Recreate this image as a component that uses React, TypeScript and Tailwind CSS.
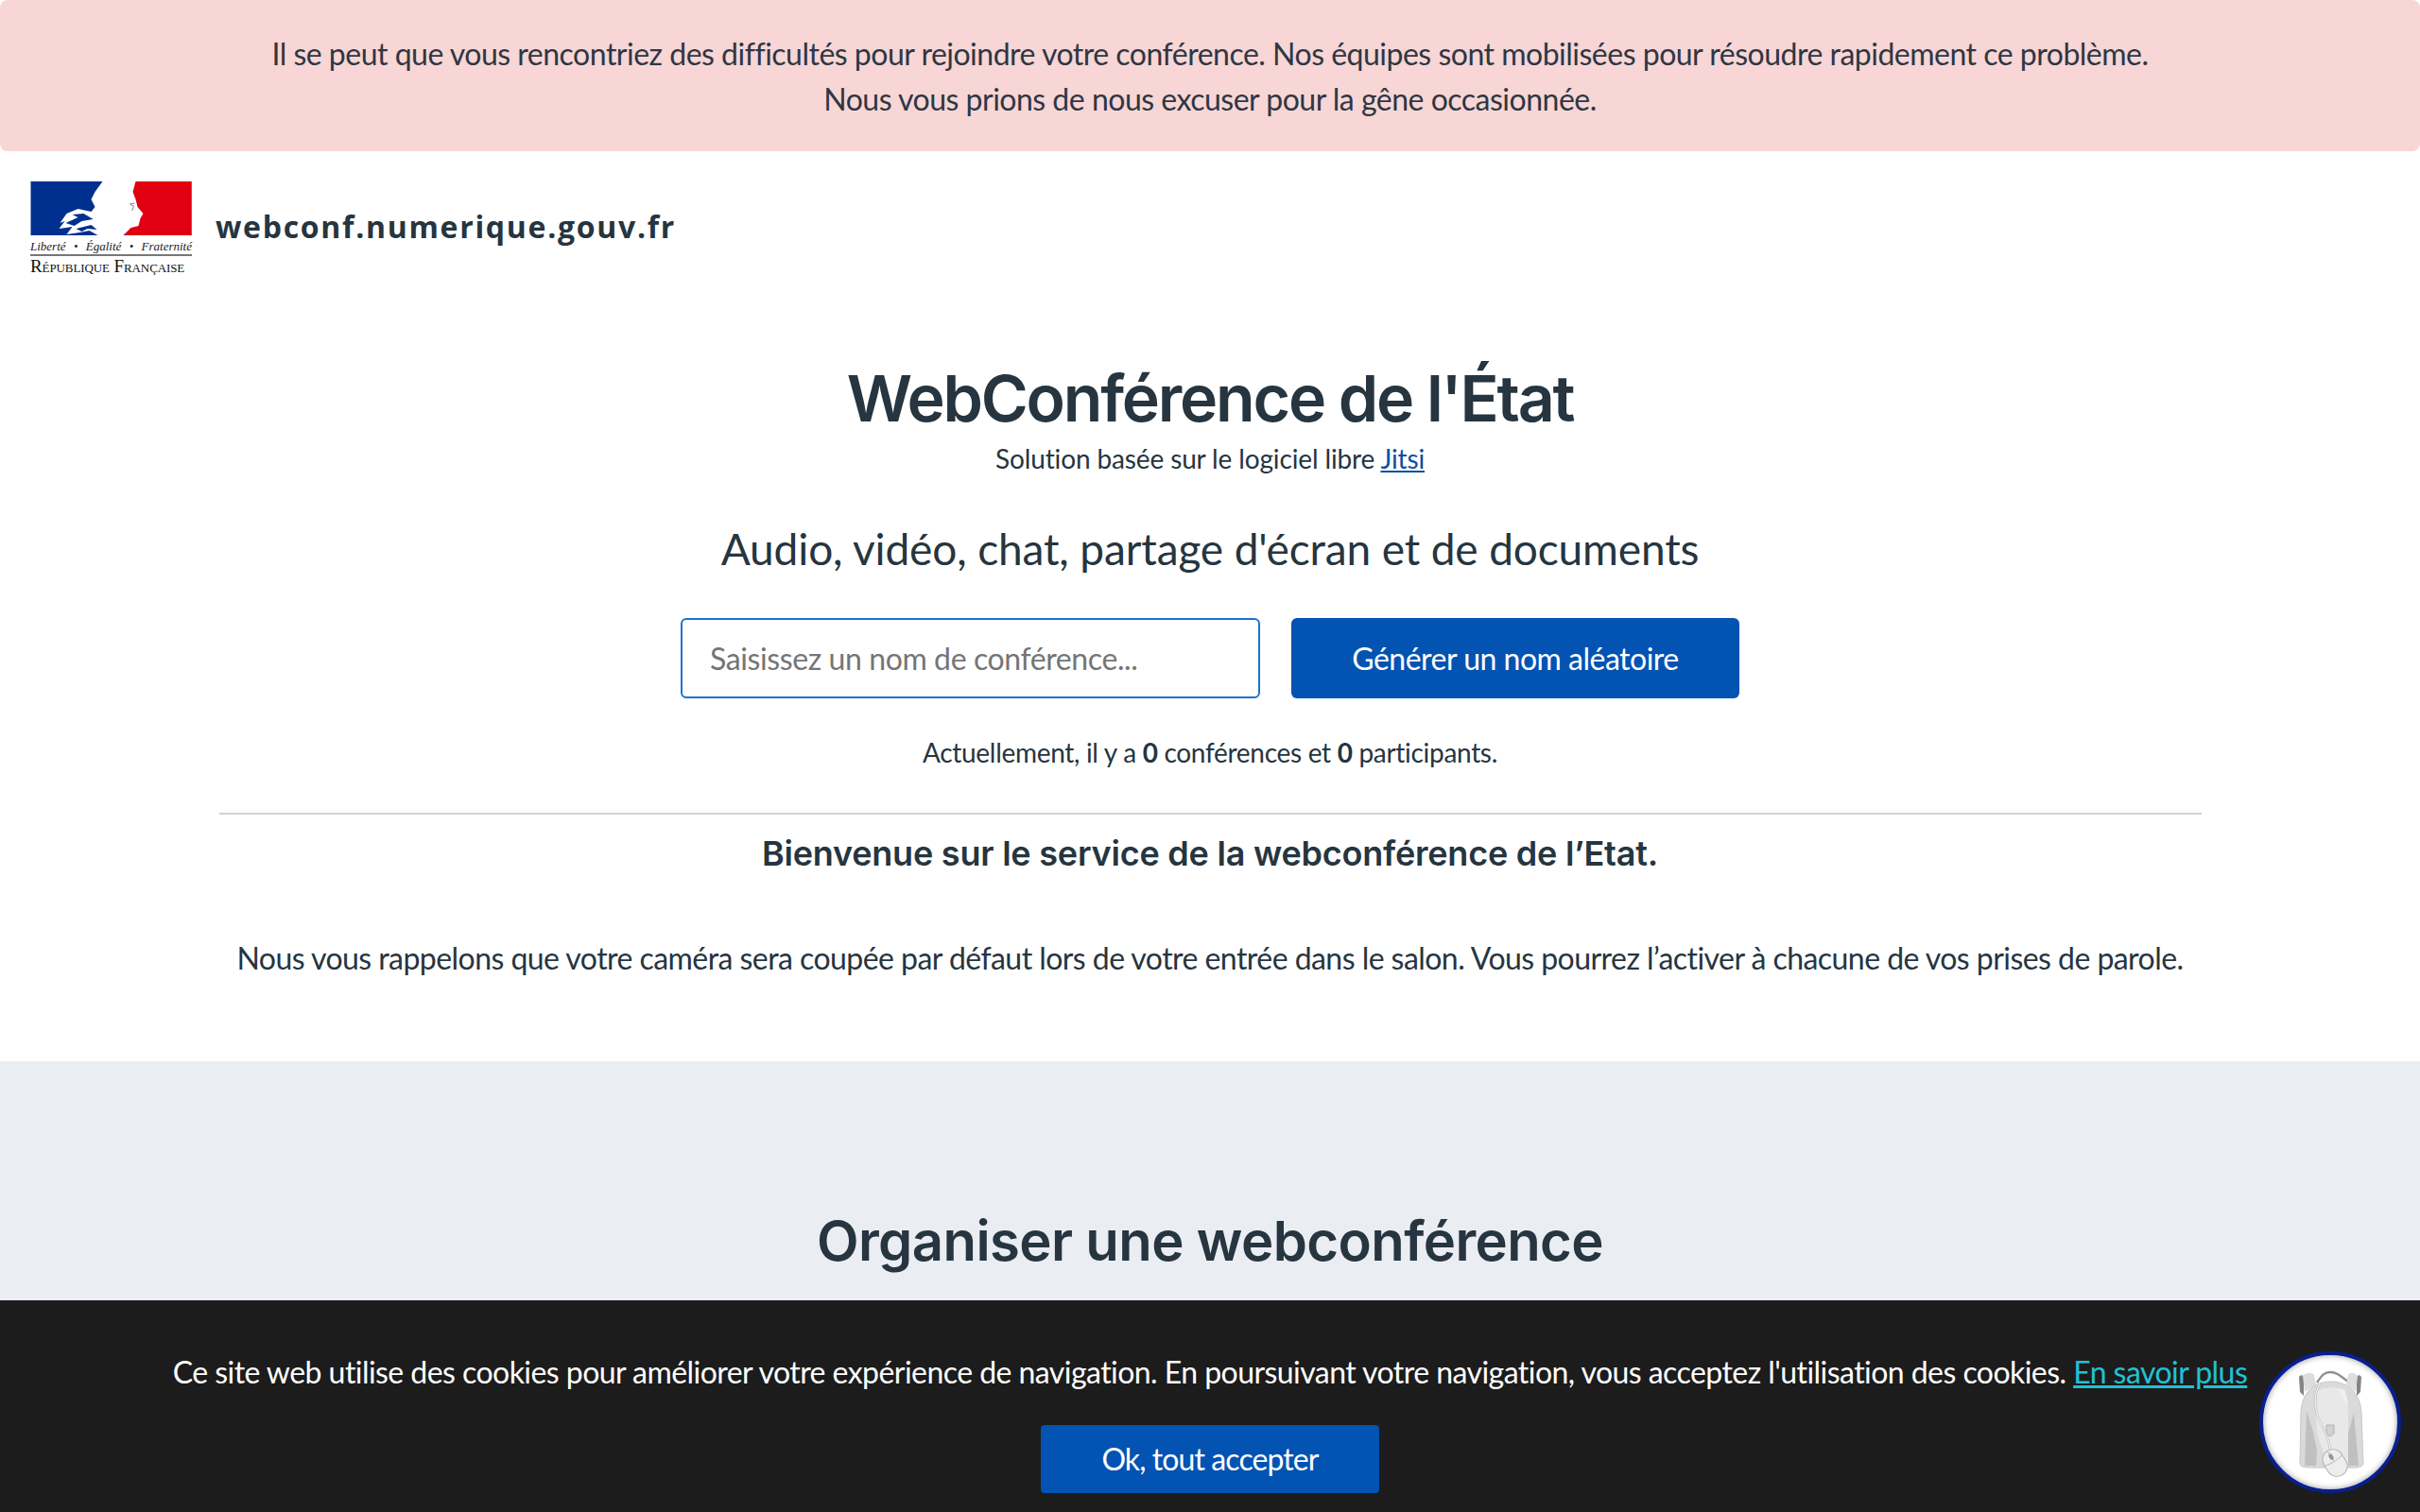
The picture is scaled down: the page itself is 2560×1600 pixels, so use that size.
const body = "font-['Lato','Liberation_Sans',sans-serif]";
const display = "font-['Inter','Liberation_Sans',sans-serif]";

// Logo de la République, le profil est dessiné à la main
const Logo = () => (
  <div className="w-[171px] flex flex-col">
    <svg viewBox="0 0 170 57" className="w-[171px] h-[57px] block">
      <rect x="0" y="0" width="170" height="57" fill="#00308f" />
      <rect x="100" y="0" width="70" height="57" fill="#e1000f" />
      <path d="M76 0 L111 0 L108 11 L111 19 L113 27 L119 34 L116 39 L114 47 L106 49 L98 57 L71 57 L62 52 L52 54 L38 56 L44 48 L30 50 L36 42 L31 44 L38 34 L50 29 L64 32 L68 27 L64 19 L68 11 Z" fill="#fff" />
      <path d="M37 44 L50 38 L44 35 L56 34 L66 40 L54 42 L46 47 Z M48 50 L64 46 L70 51 L60 50 L54 53 Z" fill="#00308f" />
      <path d="M110 23 L105 24 L109 26 L107 31" stroke="#888" strokeWidth="1" fill="none" />
    </svg>
    <div className="mt-[4px] flex justify-between font-['Liberation_Serif',serif] italic text-[13px] leading-[15px] text-[#222] whitespace-nowrap">
      <span>Liberté</span><span>•</span><span>Égalité</span><span>•</span><span>Fraternité</span>
    </div>
    <div className="mt-[1px] border-t-2 border-[#777] pt-[2px] font-['Liberation_Serif',serif] [font-variant:small-caps] text-[19px] leading-[17px] text-[#111] whitespace-nowrap tracking-[-0.1px]">
      République Française
    </div>
  </div>
);

const Backpack = () => (
  <svg viewBox="0 0 90 125" className="w-[90px] h-[125px]">
    <path d="M12 14 C14 11 17 12 17 15 L17 34 L13 30 Z" fill="#858585" />
    <path d="M78 14 C76 11 73 12 73 15 L73 34 L77 30 Z" fill="#858585" />
    <path d="M31 20 C36 13 38 9 45 9 C52 9 56 13 65 20" stroke="#8f8f8f" strokeWidth="2.4" fill="none" />
    <path d="M16 13 C20 9 26 9 28 12 L30 22 L18 30 Z M74 13 C70 9 66 9 64 12 L62 22 L72 30 Z" fill="#dddddd" />
    <path d="M13 106 L14 52 C15 30 28 19 46 19 C64 19 77 32 78 52 L80 106 C78 111 70 110 62 110 L28 110 C20 110 14 110 13 106 Z" fill="#dadada" stroke="#c6c6c6" />
    <path d="M32 28 C42 24 52 25 60 27 C64 36 64 44 64 55 L64 106 L43 106 C36 90 30 75 30 58 C30 44 30 36 32 28 Z" fill="#e8e8e8" />
    <path d="M54 27 C60 27 63 34 63 44 L58 34 Z" fill="#f2f2f2" />
    <path d="M20 50 L27 72 L31 92 L30 108 L18 108 Z" fill="#c0c0c0" />
    <path d="M70 52 L64 74 L64 108 L75 108 Z" fill="#c0c0c0" />
    <path d="M41 65 H49 V74 L45 77 L41 74 Z" fill="#d2d2d2" stroke="#b2b2b2" />
    <path d="M34 21 C29 30 28 42 31 53 C34 66 44 74 45 92" stroke="#b0b0b0" strokeWidth="2.2" fill="none" />
    <path d="M34 21 C29 30 28 42 31 53 C34 66 44 74 45 92" stroke="#f6f6f6" strokeWidth="1.2" fill="none" />
    <g transform="rotate(-32 50 105)">
      <rect x="39" y="90" width="22" height="30" rx="11" fill="#ededed" stroke="#aeaeae" strokeWidth="0.9" />
      <path d="M39 102 Q50 105 61 102 M50 90 V103" stroke="#aeaeae" strokeWidth="0.8" fill="none" />
      <rect x="48" y="94" width="4" height="7" rx="2" fill="#989898" />
    </g>
  </svg>
);

export default function App() {
  return (
    <div className={`relative w-full h-[1600px] overflow-hidden bg-white text-[#26353f] ${body}`}>
      <div className="h-[160px] bg-[#f7d6d5] rounded-[8px] pt-[33px] text-center text-[32px] leading-[48px] text-[#2f3644] tracking-[-0.5px]">
        <p>Il se peut que vous rencontriez des difficultés pour rejoindre votre conférence. Nos équipes sont mobilisées pour résoudre rapidement ce problème.</p>
        <p>Nous vous prions de nous excuser pour la gêne occasionnée.</p>
      </div>

      <header className="h-[222px] pl-[32px] pt-[32px] flex items-start gap-[25px]">
        <Logo />
        <span className="mt-[23px] font-['Open_Sans',sans-serif] font-bold text-[32px] leading-[50px] tracking-[1.7px] text-[#26353f]">webconf.numerique.gouv.fr</span>
      </header>

      <main className="flex flex-col items-center">
        <h1 className={`${display} font-semibold text-[68px] leading-[80px] -mt-[1px] tracking-[-2.2px]`}>WebConférence de l'État</h1>
        <p className="mt-[4px] text-[28px] leading-[40px] tracking-[-0.13px]">
          Solution basée sur le logiciel libre <a href="#" className="text-[#0b4ea2] underline">Jitsi</a>
        </p>
        <h2 className="mt-[46px] text-[46px] leading-[60px] tracking-[-0.13px]">Audio, vidéo, chat, partage d'écran et de documents</h2>
        <div className="mt-[43px] flex gap-[33px]">
          <input
            placeholder="Saisissez un nom de conférence..."
            className="w-[613px] h-[85px] px-[29px] rounded-[6px] border-2 border-[#1a73d0] bg-white text-[32px] tracking-[-0.4px] placeholder:text-[#757575] outline-none"
          />
          <button className="w-[474px] h-[85px] rounded-[6px] bg-[#0353b2] text-white text-[32px] tracking-[-0.5px]">Générer un nom aléatoire</button>
        </div>
        <p className="mt-[37px] text-[28px] leading-[40px] tracking-[-0.3px]">
          Actuellement, il y a <b>0</b> conférences et <b>0</b> participants.
        </p>
        <hr className="mt-[44px] w-[2097px] border-t-2 border-[#d3d3d3]" />
        <h3 className={`${display} mt-[19px] font-semibold text-[36px] leading-[44px] tracking-[-0.22px]`}>Bienvenue sur le service de la webconférence de l’Etat.</h3>
        <p className="mt-[65px] text-[32px] leading-[48px] tracking-[-0.55px]">
          Nous vous rappelons que votre caméra sera coupée par défaut lors de votre entrée dans le salon. Vous pourrez l’activer à chacune de vos prises de parole.
        </p>
      </main>

      <section className="mt-[85px] h-[253px] bg-[#eaedf2] pt-[155px] text-center">
        <h2 className={`${display} font-semibold text-[58px] leading-[70px] tracking-[-0.6px]`}>Organiser une webconférence</h2>
      </section>

      <div className="h-[224px] bg-[#1c1c1c] text-center text-white pt-[52px]">
        <p className="text-[32px] leading-[48px] tracking-[-0.55px]">
          Ce site web utilise des cookies pour améliorer votre expérience de navigation. En poursuivant votre navigation, vous acceptez l'utilisation des cookies. <a href="#" className="text-[#21c1d6] underline">En savoir plus</a>
        </p>
        <button className="mt-[32px] w-[358px] h-[72px] rounded-[4px] bg-[#0353b2] text-[32px] tracking-[-0.9px]">Ok, tout accepter</button>
      </div>

      <div className="absolute left-[2390px] top-[1430px] w-[150px] h-[150px] rounded-full bg-white border-[4px] border-[#0a1f8f] shadow-[inset_0_0_6px_#999] flex items-center justify-center">
        <Backpack />
      </div>
    </div>
  );
}
